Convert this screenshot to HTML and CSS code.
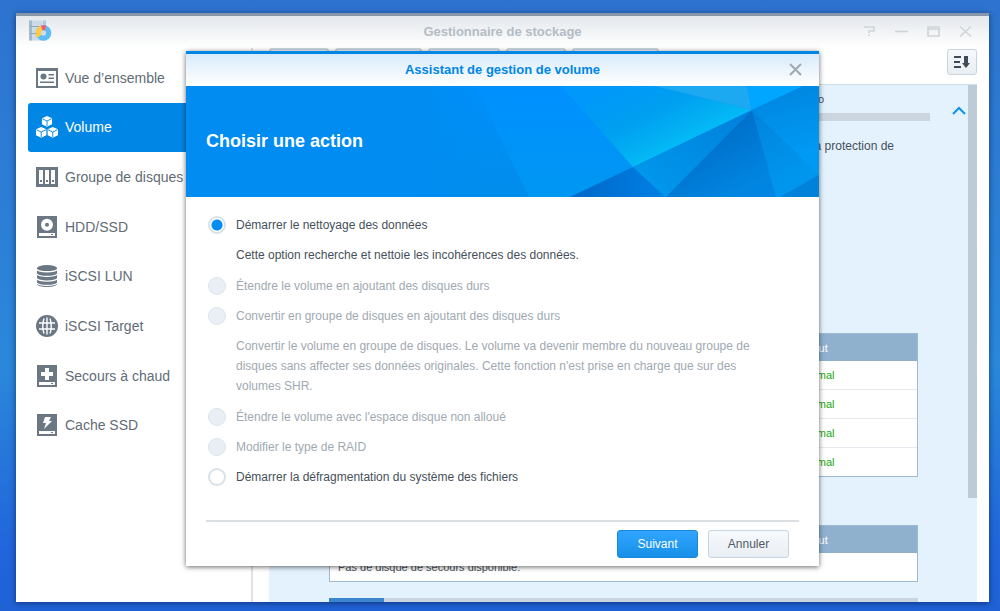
FILE: index.html
```
<!DOCTYPE html>
<html lang="fr">
<head>
    <meta charset="UTF-8">
    <meta name="viewport" content="width=device-width, initial-scale=1.0">
    <title>Gestionnaire de stockage</title>
    <link rel="stylesheet" href="styles.css">
</head>
<body>
    <div class="window">
        <header class="titlebar">
            <svg class="app-icon" width="24" height="24" viewBox="0 0 24 24">
                <rect x="1" y="1.500" width="17" height="20" rx="1" fill="#cddbe8"/>
                <rect x="1" y="1.500" width="3" height="20" fill="#a3b9cd"/>
                <rect x="15" y="1.500" width="3" height="16" fill="#b5c8d9"/>
                <path d="M2 7.500h15M2 14.500h8" stroke="#98a5b2" stroke-width="1"/>
                <circle cx="15.500" cy="14" r="7.800" fill="#5cbcf8"/>
                <path d="M15.500 14L9.500 19A7.800 7.800 0 0 1 13 6.600z" fill="#ffcb45"/>
                <path d="M15.500 14L13 6.600A7.800 7.800 0 0 1 18.500 6.800z" fill="#ee5c74"/>
                <circle cx="15.500" cy="14" r="2.700" fill="#cfdde8"/>
            </svg>
            <h1>Gestionnaire de stockage</h1>
            <div class="window-controls">
                <button type="button" aria-label="Aide"><svg width="13" height="13" viewBox="0 0 13 13"><path d="M1 2h10v4H6v2M6 9.500v1.500"/></svg></button>
                <button type="button" aria-label="Réduire"><svg width="13" height="13" viewBox="0 0 13 13"><path d="M0 6.500h13"/></svg></button>
                <button type="button" aria-label="Agrandir"><svg width="13" height="13" viewBox="0 0 13 13"><path d="M1 2h11v9H1zM1 4h11"/></svg></button>
                <button type="button" aria-label="Fermer"><svg width="13" height="13" viewBox="0 0 13 13"><path d="M1 1.500l11 10M12 1.500l-11 10"/></svg></button>
            </div>
        </header>

        <div class="workspace">
            <nav class="sidebar">
                <a href="#">
                    <svg width="22" height="22" viewBox="0 0 22 22"><path fill-rule="evenodd" d="M0 1h22v20H0zM2 4v15h18V4z"/><circle cx="7.500" cy="9.500" r="3"/><path d="M12.500 7H18v1.500h-5.500zM12.500 10.500H18V12h-5.500zM4 14.500h14V16H4z"/></svg>
                    Vue d’ensemble
                </a>
                <a href="#" class="active">
                    <svg width="22" height="22" viewBox="0 0 24 24">
                        <path d="M12 0l5.500 2.500v6.500L12 11.600 6.500 9V2.500zM5.700 12l5.600 2.500V21l-5.600 2.600L0 21v-6.500zM18.300 12l5.700 2.500V21l-5.700 2.600-5.600-2.600v-6.500z"/>
                        <path class="seam" d="M7 3L12 5.500 17 3M12 5.500V11M.5 15l5.200 2.500L11 15M5.700 17.500V23M13 15l5.300 2.500L23.500 15M18.300 17.500V23"/>
                    </svg>
                    Volume
                </a>
                <a href="#">
                    <svg width="22" height="22" viewBox="0 0 22 22"><path fill-rule="evenodd" d="M0 1h22v20H0zM3 4v14h4V4zM9 4v14h4V4zM15 4v14h4V4z"/><path d="M4 14h2v2H4zM10 14h2v2h-2zM16 14h2v2h-2z"/></svg>
                    Groupe de disques
                </a>
                <a href="#">
                    <svg width="22" height="22" viewBox="0 0 22 22"><path fill-rule="evenodd" d="M1 0h20v22H1zM3 17v3h16v-3z"/><circle class="hole" cx="11" cy="8.700" r="6"/><circle cx="11" cy="8.700" r="2"/><path d="M15 18h2v1h-2z"/></svg>
                    HDD/SSD
                </a>
                <a href="#">
                    <svg width="22" height="22" viewBox="0 0 22 22"><path d="M1 3v16c0 4 20 4 20 0V3z"/><ellipse cx="11" cy="3" rx="10" ry="3"/><path class="ring" d="M1 4.300c2 3.200 18 3.200 20 0M1 9c2 3.200 18 3.200 20 0M1 13.700c2 3.200 18 3.200 20 0"/><path class="ring" d="M1 18c2 3.200 18 3.200 20 0"/></svg>
                    iSCSI LUN
                </a>
                <a href="#">
                    <svg width="22" height="22" viewBox="0 0 22 22"><circle cx="11" cy="11" r="11"/><path class="ring" d="M11 2.500v17M3 8h16M3 14h16M8 3.500Q5.500 11 8 18.500M14 3.500Q16.500 11 14 18.500"/></svg>
                    iSCSI Target
                </a>
                <a href="#">
                    <svg width="22" height="22" viewBox="0 0 22 22"><path fill-rule="evenodd" d="M1 0h20v22H1zM3 17v3h16v-3zM9 3v4H5v4h4v4h4v-4h4V7h-4V3z"/><path d="M15 18h2v1h-2z"/></svg>
                    Secours à chaud
                </a>
                <a href="#">
                    <svg width="22" height="22" viewBox="0 0 22 22"><path fill-rule="evenodd" d="M1 0h20v22H1zM3 17v3h16v-3zM9 3h6l-2 4h3l-8 8 2-6H7z"/><path d="M15 18h2v1h-2z"/></svg>
                    Cache SSD
                </a>
            </nav>

            <main class="content">
                <div class="toolbar">
                    <button type="button" aria-label="Créer"></button>
                    <button type="button" class="wide" aria-label="Supprimer"></button>
                    <button type="button" class="medium" aria-label="Modifier"></button>
                    <button type="button" aria-label="Gérer"></button>
                    <button type="button" class="wide" aria-label="Configurer"></button>
                    <button type="button" class="sort" aria-label="Trier">
                        <svg width="18" height="14" viewBox="0 0 18 14"><path d="M1 2h7M1 7h6M1 12h7" stroke="#414b55" stroke-width="2" fill="none"/><path d="M11 1h4v7h2l-4 5-4-5h2z" fill="#414b55"/></svg>
                    </button>
                </div>

                <section class="panel">
                    <div class="summary">
                        <div class="capacity">To</div>
                        <div class="usage"></div>
                        <svg class="chevron" width="14" height="9" viewBox="0 0 14 9"><path d="M1 8l6-6 6 6"/></svg>
                        <p class="note">la protection de</p>
                    </div>
                    <table class="disks">
                        <thead><tr><th></th><th class="status">Statut</th></tr></thead>
                        <tbody>
                            <tr><td></td><td class="ok">Normal</td></tr>
                            <tr><td></td><td class="ok">Normal</td></tr>
                            <tr><td></td><td class="ok">Normal</td></tr>
                            <tr><td></td><td class="ok">Normal</td></tr>
                        </tbody>
                    </table>
                    <table class="spares">
                        <thead><tr><th></th><th class="status">Statut</th></tr></thead>
                        <tbody><tr><td colspan="2">Pas de disque de secours disponible.</td></tr></tbody>
                    </table>
                    <div class="next-usage"><span></span></div>
                    <div class="scrollbar"></div>
                </section>
            </main>
        </div>

        <form class="dialog" role="dialog" aria-labelledby="dialog-title">
            <div class="dialog-title">
                <h2 id="dialog-title">Assistant de gestion de volume</h2>
                <button type="button" class="close" aria-label="Fermer"><svg width="13" height="13" viewBox="0 0 13 13"><path d="M1 1l11 11M12 1L1 12"/></svg></button>
            </div>
            <div class="banner">
                <svg class="facets" width="400" height="111" viewBox="0 0 400 111" preserveAspectRatio="none">
                    <defs>
                        <linearGradient id="left" x1="0" y1="0" x2="0" y2="1"><stop offset="0" stop-color="#0090fc"/><stop offset="1" stop-color="#008cea"/></linearGradient>
                        <linearGradient id="fade" x1="0" y1="0" x2="1" y2="0"><stop offset="0" stop-color="#008cf0"/><stop offset="1" stop-color="#008cf0" stop-opacity="0"/></linearGradient>
                        <linearGradient id="mid" x1="0" y1="0" x2="0" y2="1"><stop offset="0" stop-color="#0090ff"/><stop offset="1" stop-color="#0097f2"/></linearGradient>
                        <linearGradient id="glow" gradientUnits="userSpaceOnUse" x1="190" y1="0" x2="228" y2="76"><stop offset="0" stop-color="#0098fb"/><stop offset="0.500" stop-color="#009ff0"/><stop offset="1" stop-color="#04baf5"/></linearGradient>
                        <linearGradient id="lower" x1="1" y1="0" x2="0" y2="1"><stop offset="0" stop-color="#007fdb"/><stop offset="1" stop-color="#009bee"/></linearGradient>
                        <linearGradient id="deep" gradientUnits="userSpaceOnUse" x1="285" y1="60" x2="315" y2="111"><stop offset="0" stop-color="#0072cc"/><stop offset="1" stop-color="#0086e2"/></linearGradient>
                        <linearGradient id="base" x1="0" y1="0" x2="1" y2="0"><stop offset="0" stop-color="#0068c8"/><stop offset="1" stop-color="#007fe4"/></linearGradient>
                        <linearGradient id="right" gradientUnits="userSpaceOnUse" x1="333" y1="24" x2="365" y2="95"><stop offset="0" stop-color="#0082dc"/><stop offset="1" stop-color="#0096ee"/></linearGradient>
                        <linearGradient id="edge" gradientUnits="userSpaceOnUse" x1="370" y1="5" x2="385" y2="70"><stop offset="0" stop-color="#0088e2"/><stop offset="1" stop-color="#009af4"/></linearGradient>
                    </defs>
                    <path fill="url(#left)" d="M0 0h56l54 111H0z"/>
                    <path fill="url(#fade)" d="M0 0h70v111H0z"/>
                    <path fill="url(#mid)" d="M56 0h86l72 81-63 30h-41z"/>
                    <path fill="url(#glow)" d="M142 0h94l97 24-119 57z"/>
                    <path fill="#1da9f2" d="M236 0h92l5 24z"/>
                    <path fill="#00a6ff" d="M328 0h56l-51 24z"/>
                    <path fill="url(#base)" d="M151 111l63-30 32 30z"/>
                    <path fill="url(#lower)" d="M214 81l119-57-86 87z"/>
                    <path fill="url(#deep)" d="M333 24l-86 87h111z"/>
                    <path fill="url(#right)" d="M333 24l67 64v1l-39 22h-4z"/>
                    <path fill="url(#edge)" d="M384 0h16v89l-67-65z"/>
                    <path fill="#0082db" d="M400 89v22h-39z"/>
                </svg>
                <h3>Choisir une action</h3>
            </div>
            <div class="options">
                <label><input type="radio" name="action" checked>Démarrer le nettoyage des données</label>
                <p>Cette option recherche et nettoie les incohérences des données.</p>
                <label class="disabled"><input type="radio" name="action" disabled>Étendre le volume en ajoutant des disques durs</label>
                <label class="disabled"><input type="radio" name="action" disabled>Convertir en groupe de disques en ajoutant des disques durs</label>
                <p class="disabled">Convertir le volume en groupe de disques. Le volume va devenir membre du nouveau groupe de disques sans affecter ses données originales. Cette fonction n'est prise en charge que sur des volumes SHR.</p>
                <label class="disabled"><input type="radio" name="action" disabled>Étendre le volume avec l'espace disque non alloué</label>
                <label class="disabled"><input type="radio" name="action" disabled>Modifier le type de RAID</label>
                <label><input type="radio" name="action">Démarrer la défragmentation du système des fichiers</label>
            </div>
            <div class="actions">
                <button type="button" class="primary">Suivant</button>
                <button type="button">Annuler</button>
            </div>
        </form>
    </div>
</body>
</html>
```
FILE: styles.css
```
* {
    box-sizing: border-box;
}
body {
    font-family: "Liberation Sans", Arial, sans-serif;
    font-size: 12px;
    color: #46505a;
    margin: 0;
    padding: 13px 11px 9px 16px;
    height: 100vh;
    display: flex;
    background: linear-gradient(#2e73cf, #2a88da 60%, #2165dc 90%, #2062d6);
}
h1, h2, h3, p {
    margin: 0;
}
button {
    font-family: inherit;
    font-size: 12px;
    color: #505a64;
    background: linear-gradient(#f6fafd, #e9eef3);
    border: 1px solid #c8d4df;
    border-radius: 3px;
    padding: 0;
}
.window {
    position: relative;
    flex: 1;
    display: flex;
    flex-direction: column;
    background-color: #fff;
    border-top: 3px solid #8796a8;
    box-shadow: 0 1px 6px rgba(0, 20, 60, 0.6);
}
.titlebar {
    display: flex;
    align-items: center;
    height: 32px;
    padding: 0 17px 2px 12px;
    background: linear-gradient(#e4e8ec, #fff);
}
.titlebar h1 {
    flex: 1;
    text-align: center;
    font-size: 13px;
    color: #b4bcc4;
    padding-left: 90px;
}
.window-controls {
    display: flex;
    gap: 19px;
}
.window-controls button,
.close {
    display: flex;
    background: none;
    border: none;
}
.window-controls svg,
.close svg {
    fill: none;
    stroke: #cfd4d8;
    stroke-width: 2;
}
.window-controls svg {
    stroke-width: 1.6;
}
.workspace {
    flex: 1;
    display: flex;
    min-height: 0;
}
.sidebar {
    width: 237px;
    padding: 5px 0 152px 12px;
    border-right: 2px solid #dfe3e6;
    display: grid;
    grid-auto-rows: 1fr;
}
.sidebar a {
    display: flex;
    align-items: center;
    gap: 7px;
    padding-left: 8px;
    font-size: 14px;
    color: #626c76;
    text-decoration: none;
    border-radius: 3px 0 0 3px;
}
.sidebar svg {
    fill: #6b7783;
}
.sidebar .active {
    background-color: #0086e5;
    color: #fff;
}
.sidebar .active svg {
    fill: #fff;
}
.sidebar .seam {
    fill: none;
    stroke: #0086e5;
}
.sidebar .ring {
    fill: none;
    stroke: #fff;
    stroke-width: 1.4;
}
.sidebar .hole {
    fill: #fff;
}
.content {
    flex: 1;
    display: flex;
    flex-direction: column;
    min-width: 0;
    padding: 0 12px 0 16px;
}
.toolbar {
    display: flex;
    gap: 6px;
    height: 36px;
}
.toolbar button {
    width: 60px;
    height: 27px;
    border-width: 2px;
}
.toolbar .medium {
    width: 72px;
}
.toolbar .wide {
    width: 87px;
}
.toolbar .sort {
    width: 30px;
    height: 26px;
    margin: 1px 0 0 auto;
    border-width: 1px;
}
.sort svg {
    display: block;
    margin: auto;
}
.panel {
    position: relative;
    flex: 1;
    min-height: 0;
    overflow: hidden;
    background-color: #e4f2fe;
    border-top: 1px solid #cfdde8;
}
.summary {
    position: relative;
    height: 248px;
    padding: 7px 47px 0 60px;
}
.capacity {
    line-height: 14px;
    padding-right: 106px;
    text-align: right;
    font-size: 11px;
}
.usage {
    height: 8px;
    margin: 7px 0 15px;
    background-color: #cbd5df;
}
.note {
    line-height: 20px;
    padding-right: 36px;
    text-align: right;
}
.chevron {
    position: absolute;
    top: 21px;
    right: 11px;
    fill: none;
    stroke: #0c92ee;
    stroke-width: 2;
}
.panel table {
    width: calc(100% - 119px);
    margin: 0 59px 48px 60px;
    border-collapse: separate;
    border-spacing: 0;
    border: 1px solid #9dbcd2;
    background-color: #fff;
    font-size: 11px;
}
.panel th,
.panel td {
    height: 29px;
    padding: 0 8px;
    text-align: left;
    border-bottom: 1px solid #e6eaee;
}
.panel th {
    height: 27px;
    color: #fff;
    font-weight: normal;
    background-color: #8fb1cd;
    border: none;
}
.panel tr:last-child td {
    height: 28px;
    border-bottom: none;
}
.panel .status {
    width: 126px;
}
.panel .ok {
    color: #20a808;
}
.panel .spares {
    margin-bottom: 16px;
}
.next-usage {
    margin: 0 59px 0 60px;
    height: 8px;
    background-color: #cbd5df;
}
.next-usage span {
    display: block;
    width: 55px;
    height: 8px;
    background-color: #3d85cc;
}
.scrollbar {
    position: absolute;
    top: 0;
    right: 0;
    width: 9px;
    height: 413px;
    background-color: #bccbd6;
}
.dialog {
    position: absolute;
    top: 35px;
    left: 170px;
    right: 170px;
    background-color: #fff;
    border-top: 3px solid #0086e5;
    box-shadow: 0 1px 5px rgba(0, 0, 0, 0.6);
}
.dialog-title {
    display: flex;
    align-items: center;
    height: 32px;
    padding: 0 17px 2px;
    background: linear-gradient(#d8ebfa, #fff);
}
.dialog-title h2 {
    flex: 1;
    text-align: center;
    padding-left: 13px;
    font-size: 13px;
    color: #0086e5;
}
.close svg {
    stroke: #a0a8b0;
}
.banner {
    position: relative;
    display: flex;
    align-items: center;
    height: 111px;
    padding-left: 20px;
    overflow: hidden;
    background-color: #008cf0;
}
.banner h3 {
    position: relative;
    font-size: 18px;
    color: #fff;
}
.facets {
    position: absolute;
    top: 0;
    right: 0;
}
.options {
    padding: 13px 20px 28px;
}
.options label {
    display: flex;
    align-items: center;
    height: 30px;
}
.options input {
    appearance: none;
    width: 18px;
    height: 18px;
    margin: 0 10px 0 2px;
    border: 2px solid #d9e1e8;
    border-radius: 50%;
    background-color: #fff;
}
.options input:checked {
    background: radial-gradient(circle, #008cf0 5px, #fff 6px);
}
.options input:disabled {
    background-color: #e9eff4;
    border: 1px solid #dbe5ed;
}
.options p {
    line-height: 20px;
    margin: 5px 30px 6px;
}
.options .disabled {
    color: #a0a9b2;
}
.actions {
    display: flex;
    justify-content: flex-end;
    gap: 10px;
    margin: 0 20px;
    padding: 8px 10px;
    border-top: 2px solid #dcdfe1;
}
.actions button {
    width: 81px;
    height: 28px;
}
.actions .primary {
    color: #fff;
    background: linear-gradient(#30a5ff, #1690e8);
    border-color: #1687da;
}
```
